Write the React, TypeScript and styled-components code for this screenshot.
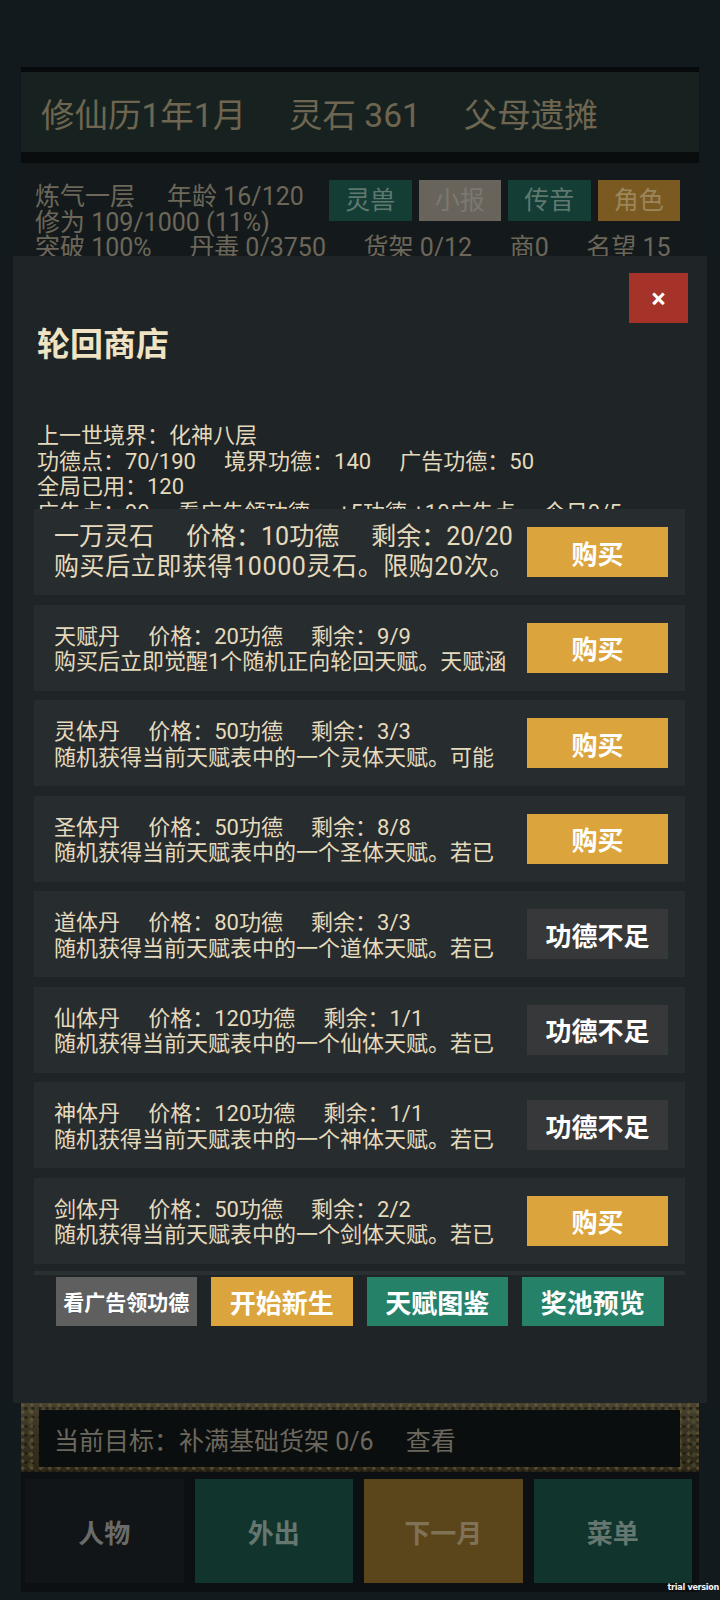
import React from 'react';
import styled, { createGlobalStyle } from 'styled-components';

const GlobalStyle = createGlobalStyle`
    html, body {
        margin: 0;
        padding: 0;
        background: #131a1d;
    }
    body {
        font-family: Roboto, "Noto Sans CJK SC", sans-serif;
    }
    * {
        box-sizing: border-box;
    }
`;

type Tone = 'gold' | 'teal' | 'gray' | 'dark';

const Screen = styled.div`
    position: relative;
    width: 720px;
    height: 1600px;
    overflow: hidden;
    background: #131a1d;
`;

/* the game page, dimmed behind the shop dialog */
const Page = styled.div`
    display: flex;
    flex-direction: column;
    height: 100%;
    padding: 67px 21px 8px;
`;

const TopBar = styled.div`
    height: 85px;
    flex: none;
    border-top: 5px solid #070a0b;
    background: #172220;
    display: flex;
    align-items: center;
    padding-left: 20px;
    font-size: 33.5px;
    color: #6f6651;
    white-space: nowrap;
`;

const Sep = styled.span<{ $wide?: boolean }>`
    display: inline-block;
    width: ${(p) => (p.$wide ? 1.5 : 1.28)}em;
`;

const Divider = styled.div`
    height: 11px;
    flex: none;
    background: #0a0d0e;
`;

const StatusPanel = styled.div`
    flex: 1;
    background: #141a1c;
    padding: 21px 19px 0 14px;
    font-size: 25px;
    line-height: 25.5px;
    color: #6c6759;
    white-space: nowrap;
`;

const StatusRow = styled.div`
    display: flex;
    align-items: flex-start;
`;

const StatusButtons = styled.div`
    display: flex;
    gap: 7px;
    margin: -4px 0 0 auto;
`;

const statusTones: Record<string, { bg: string; fg: string }> = {
    teal: { bg: '#143d36', fg: '#5f796f' },
    gray: { bg: '#68645c', fg: '#7c786f' },
    gold: { bg: '#7a5a21', fg: '#9c865c' },
};

const StatusButton = styled.div<{ $tone: 'teal' | 'gray' | 'gold' }>`
    width: 82.5px;
    height: 41px;
    display: flex;
    align-items: center;
    justify-content: center;
    font-size: 25px;
    background: ${(p) => statusTones[p.$tone].bg};
    color: ${(p) => statusTones[p.$tone].fg};
`;

const GoalFrame = styled.div`
    height: 69px;
    flex: none;
    padding: 7px 19px 5px 18px;
    background:
        radial-gradient(circle at 20% 30%, rgba(110, 98, 62, 0.55) 0 1.5px, transparent 2px) 0 0 / 9px 7px,
        radial-gradient(circle at 70% 60%, rgba(22, 20, 12, 0.6) 0 1.5px, transparent 2px) 0 0 / 7px 9px,
        radial-gradient(circle at 50% 50%, rgba(84, 92, 48, 0.45) 0 2px, transparent 3px) 3px 2px / 13px 11px,
        linear-gradient(180deg, #4a4230 0, #3a3323 40%, #2e2819 100%);
`;

const GoalBox = styled.div`
    height: 100%;
    background: #0b0e0f;
    display: flex;
    align-items: center;
    padding-left: 15px;
    font-size: 25px;
    color: #6c685d;
    white-space: nowrap;
`;

const NavBar = styled.div`
    height: 120px;
    flex: none;
    background: #0c1012;
    padding: 7px 7px 9px 4px;
    display: grid;
    grid-template-columns: repeat(4, 1fr);
    gap: 11px;
`;

const navTones: Record<string, { bg: string; fg: string }> = {
    dark: { bg: '#121517', fg: '#6b6c69' },
    teal: { bg: '#11342d', fg: '#667770' },
    gold: { bg: '#5b451a', fg: '#7f7256' },
};

const NavButton = styled.div<{ $tone: 'dark' | 'teal' | 'gold' }>`
    display: flex;
    align-items: center;
    justify-content: center;
    font-size: 26px;
    font-weight: 700;
    background: ${(p) => navTones[p.$tone].bg};
    color: ${(p) => navTones[p.$tone].fg};
`;

const Watermark = styled.div`
    position: absolute;
    right: 1px;
    bottom: 8px;
    font-family: "DejaVu Sans Condensed", "DejaVu Sans", sans-serif;
    font-size: 9px;
    font-weight: 700;
    letter-spacing: -0.3px;
    color: #f2f2f2;
`;

/* shop dialog */
const Dialog = styled.div`
    position: absolute;
    left: 13px;
    top: 256px;
    width: 694px;
    height: 1147px;
    background: #1f2527;
    display: flex;
    flex-direction: column;
`;

const CloseRow = styled.div`
    display: flex;
    justify-content: flex-end;
    padding: 17px 19px 0 0;
`;

const CloseButton = styled.button`
    width: 59px;
    height: 50px;
    border: none;
    padding: 0;
    background: #a5332a;
    color: #ffffff;
    font-family: "Noto Sans", sans-serif;
    font-size: 28px;
    font-weight: 700;
    line-height: 1;
    cursor: pointer;
`;

const Title = styled.h2`
    margin: 2px 0 0 24px;
    font-size: 33px;
    line-height: 40px;
    font-weight: 700;
    color: #efe3c3;
`;

const Info = styled.div`
    margin: 58px 0 0 24px;
    height: 86px;
    overflow: hidden;
    font-size: 22px;
    line-height: 25.5px;
    color: #e4d9bc;
    white-space: nowrap;
`;

const List = styled.div`
    display: flex;
    flex-direction: column;
    gap: 9.5px;
    margin: 0 22px 0 21px;
`;

const Card = styled.div`
    height: 86px;
    display: flex;
    align-items: center;
    gap: 13px;
    padding: 0 17px 0 20px;
    background: #272d2f;
`;

const CardText = styled.div<{ $big?: boolean }>`
    width: 460px;
    flex: none;
    padding-top: ${(p) => (p.$big ? 0 : 3)}px;
    font-size: ${(p) => (p.$big ? 25 : 22)}px;
    line-height: ${(p) => (p.$big ? 30 : 25.5)}px;
    color: #e6dabd;
`;

const CardTitle = styled.div`
    white-space: nowrap;
`;

const CardDesc = styled.div<{ $big?: boolean }>`
    height: ${(p) => (p.$big ? 30 : 25.5)}px;
    overflow: hidden;
    white-space: ${(p) => (p.$big ? 'nowrap' : 'normal')};
    letter-spacing: ${(p) => (p.$big ? 0.6 : 0)}px;
`;

const ActionButton = styled.button<{ $tone: Tone; $size?: number }>`
    width: 141px;
    height: 50px;
    flex: none;
    margin-left: auto;
    border: none;
    padding: 0;
    font-family: inherit;
    font-size: ${(p) => p.$size || 26}px;
    font-weight: 700;
    color: #ffffff;
    white-space: nowrap;
    cursor: pointer;
    background: ${(p) =>
        p.$tone === 'gold'
            ? '#dba43c'
            : p.$tone === 'teal'
            ? '#268169'
            : p.$tone === 'gray'
            ? '#5f5f5f'
            : '#363839'};
`;

const Footer = styled.div`
    margin: 7px 22px 0 21px;
    padding-top: 2px;
    border-top: 4px solid #2a3032;
    display: flex;
    justify-content: center;
    gap: 14px;

    ${ActionButton} {
        width: 141.5px;
        height: 49px;
        margin-left: 0;
    }
`;

interface IShopItem {
    name: string;
    price: number;
    left: string;
    desc: string;
    big?: boolean;
}

const items: IShopItem[] = [
    { name: '一万灵石', price: 10, left: '20/20', desc: '购买后立即获得10000灵石。限购20次。', big: true },
    { name: '天赋丹', price: 20, left: '9/9', desc: '购买后立即觉醒1个随机正向轮回天赋。天赋涵盖修炼、经营与战斗。' },
    { name: '灵体丹', price: 50, left: '3/3', desc: '随机获得当前天赋表中的一个灵体天赋。可能获得已拥有的体质。' },
    { name: '圣体丹', price: 50, left: '8/8', desc: '随机获得当前天赋表中的一个圣体天赋。若已拥有则返还功德。' },
    { name: '道体丹', price: 80, left: '3/3', desc: '随机获得当前天赋表中的一个道体天赋。若已拥有则返还功德。' },
    { name: '仙体丹', price: 120, left: '1/1', desc: '随机获得当前天赋表中的一个仙体天赋。若已拥有则返还功德。' },
    { name: '神体丹', price: 120, left: '1/1', desc: '随机获得当前天赋表中的一个神体天赋。若已拥有则返还功德。' },
    { name: '剑体丹', price: 50, left: '2/2', desc: '随机获得当前天赋表中的一个剑体天赋。若已拥有则返还功德。' },
];

const merit = 70;

function ShopCard({ item }: { item: IShopItem }) {
    const canBuy = item.price <= merit;
    return (
        <Card>
            <CardText $big={item.big}>
                <CardTitle>
                    {item.name}
                    <Sep />
                    价格：{item.price}功德
                    <Sep />
                    剩余：{item.left}
                </CardTitle>
                <CardDesc $big={item.big}>{item.desc}</CardDesc>
            </CardText>
            <ActionButton $tone={canBuy ? 'gold' : 'dark'}>
                {canBuy ? '购买' : '功德不足'}
            </ActionButton>
        </Card>
    );
}

export default function App() {
    return (
        <Screen>
            <GlobalStyle />
            <Page>
                <TopBar>
                    修仙历1年1月
                    <Sep />
                    灵石 361
                    <Sep />
                    父母遗摊
                </TopBar>
                <Divider />
                <StatusPanel>
                    <StatusRow>
                        <div>
                            <div>
                                炼气一层
                                <Sep />
                                年龄 16/120
                            </div>
                            <div>修为 109/1000 (11%)</div>
                        </div>
                        <StatusButtons>
                            <StatusButton $tone="teal">灵兽</StatusButton>
                            <StatusButton $tone="gray">小报</StatusButton>
                            <StatusButton $tone="teal">传音</StatusButton>
                            <StatusButton $tone="gold">角色</StatusButton>
                        </StatusButtons>
                    </StatusRow>
                    <div>
                        突破 100%
                        <Sep $wide />
                        丹毒 0/3750
                        <Sep $wide />
                        货架 0/12
                        <Sep $wide />
                        商0
                        <Sep $wide />
                        名望 15
                    </div>
                </StatusPanel>
                <GoalFrame>
                    <GoalBox>
                        当前目标：补满基础货架 0/6
                        <Sep />
                        查看
                    </GoalBox>
                </GoalFrame>
                <NavBar>
                    <NavButton $tone="dark">人物</NavButton>
                    <NavButton $tone="teal">外出</NavButton>
                    <NavButton $tone="gold">下一月</NavButton>
                    <NavButton $tone="teal">菜单</NavButton>
                </NavBar>
            </Page>

            <Dialog>
                <CloseRow>
                    <CloseButton>×</CloseButton>
                </CloseRow>
                <Title>轮回商店</Title>
                <Info>
                    <div>上一世境界：化神八层</div>
                    <div>
                        功德点：70/190
                        <Sep />
                        境界功德：140
                        <Sep />
                        广告功德：50
                    </div>
                    <div>全局已用：120</div>
                    <div>
                        广告点：90
                        <Sep />
                        看广告领功德
                        <Sep />
                        +5功德 +10广告点
                        <Sep />
                        今日0/5
                    </div>
                </Info>
                <List>
                    {items.map((item) => (
                        <ShopCard key={item.name} item={item} />
                    ))}
                </List>
                <Footer>
                    <ActionButton $tone="gray" $size={21}>
                        看广告领功德
                    </ActionButton>
                    <ActionButton $tone="gold">开始新生</ActionButton>
                    <ActionButton $tone="teal">天赋图鉴</ActionButton>
                    <ActionButton $tone="teal">奖池预览</ActionButton>
                </Footer>
            </Dialog>
            <Watermark>trial version</Watermark>
        </Screen>
    );
}
